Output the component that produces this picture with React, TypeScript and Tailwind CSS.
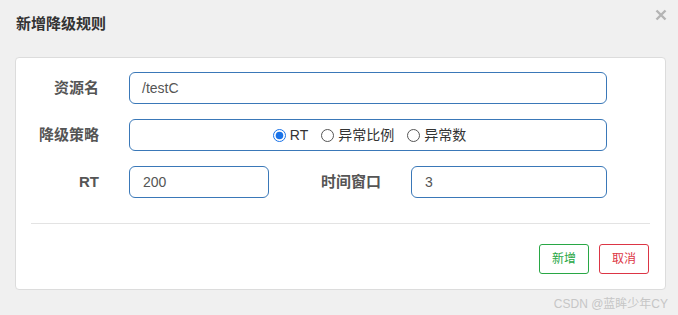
import React from "react";

const font = { fontFamily: '"Liberation Sans", "Noto Sans CJK SC", sans-serif' };

function Label({ children, w }: { children: React.ReactNode; w: string }) {
  return (
    <div className={`${w} shrink-0 text-right text-[15px] font-bold text-[#555] leading-[32px]`}>
      {children}
    </div>
  );
}

function Radio({ label, checked }: { label: string; checked?: boolean }) {
  return (
    <label className="flex items-center">
      {checked ? (
        <svg width="13" height="13" viewBox="0 0 13 13" className="shrink-0">
          <circle cx="6.5" cy="6.5" r="6" fill="white" stroke="#1a73e8" strokeWidth="1" />
          <circle cx="6.5" cy="6.5" r="3.8" fill="#1a73e8" />
        </svg>
      ) : (
        <svg width="13" height="13" viewBox="0 0 13 13" className="shrink-0">
          <circle cx="6.5" cy="6.5" r="6" fill="white" stroke="#555" strokeWidth="1" />
        </svg>
      )}
      <span className="ml-[4px] text-[14px] text-[#333]">{label}</span>
    </label>
  );
}

export default function App() {
  return (
    <div className="w-[678px] h-[315px] bg-[#f0f0f0] relative overflow-hidden" style={font}>
      <div className="flex items-start justify-between pl-[16px] pr-[11px] pt-[14px] h-[57px]">
        <div className="text-[15px] font-bold text-[#333] leading-[20px]">新增降级规则</div>
        <svg width="12" height="12" viewBox="0 0 12 12" className="mt-[-5px]">
          <path d="M1.5 1.5 L10.5 10.5 M10.5 1.5 L1.5 10.5" stroke="#b4b4b4" strokeWidth="2.4" />
        </svg>
      </div>
      <div className="ml-[15px] w-[651px] h-[233px] bg-white border border-[#dcdcdc] rounded-[4px] pt-[14px]">
        <div className="flex flex-col gap-[15px]">
          <div className="flex items-center">
            <Label w="w-[83px]">资源名</Label>
            <div className="ml-[30px] w-[478px] h-[32px] border border-[#3a78b8] rounded-[6px] flex items-center pl-[12px] text-[14px] text-[#555]">
              /testC
            </div>
          </div>
          <div className="flex items-center">
            <Label w="w-[83px]">降级策略</Label>
            <div className="ml-[30px] w-[478px] h-[32px] border border-[#3a78b8] rounded-[6px] flex items-center justify-center gap-[13px] pl-[3px]">
              <Radio label="RT" checked />
              <Radio label="异常比例" />
              <Radio label="异常数" />
            </div>
          </div>
          <div className="flex items-center">
            <Label w="w-[83px]">RT</Label>
            <div className="ml-[30px] w-[140px] h-[32px] border border-[#3a78b8] rounded-[6px] flex items-center pl-[13px] text-[14px] text-[#555]">
              200
            </div>
            <Label w="w-[112px]">时间窗口</Label>
            <div className="ml-[30px] w-[196px] h-[32px] border border-[#3a78b8] rounded-[6px] flex items-center pl-[13px] text-[14px] text-[#555]">
              3
            </div>
          </div>
        </div>
        <div className="mx-[15px] mt-[25px] h-px bg-[#e3e3e3]" />
        <div className="flex justify-end gap-[10px] pr-[16px] mt-[20px]">
          <button className="w-[50px] h-[30px] border border-[#28a745] rounded-[3px] text-[12px] text-[#28a745] bg-white">
            新增
          </button>
          <button className="w-[50px] h-[30px] border border-[#dc3545] rounded-[3px] text-[12px] text-[#dc3545] bg-white">
            取消
          </button>
        </div>
      </div>
      <div className="absolute right-[10px] top-[296px] text-[12px] text-[#c6c6c6] leading-[16px]">
        CSDN @蓝眸少年CY
      </div>
    </div>
  );
}
